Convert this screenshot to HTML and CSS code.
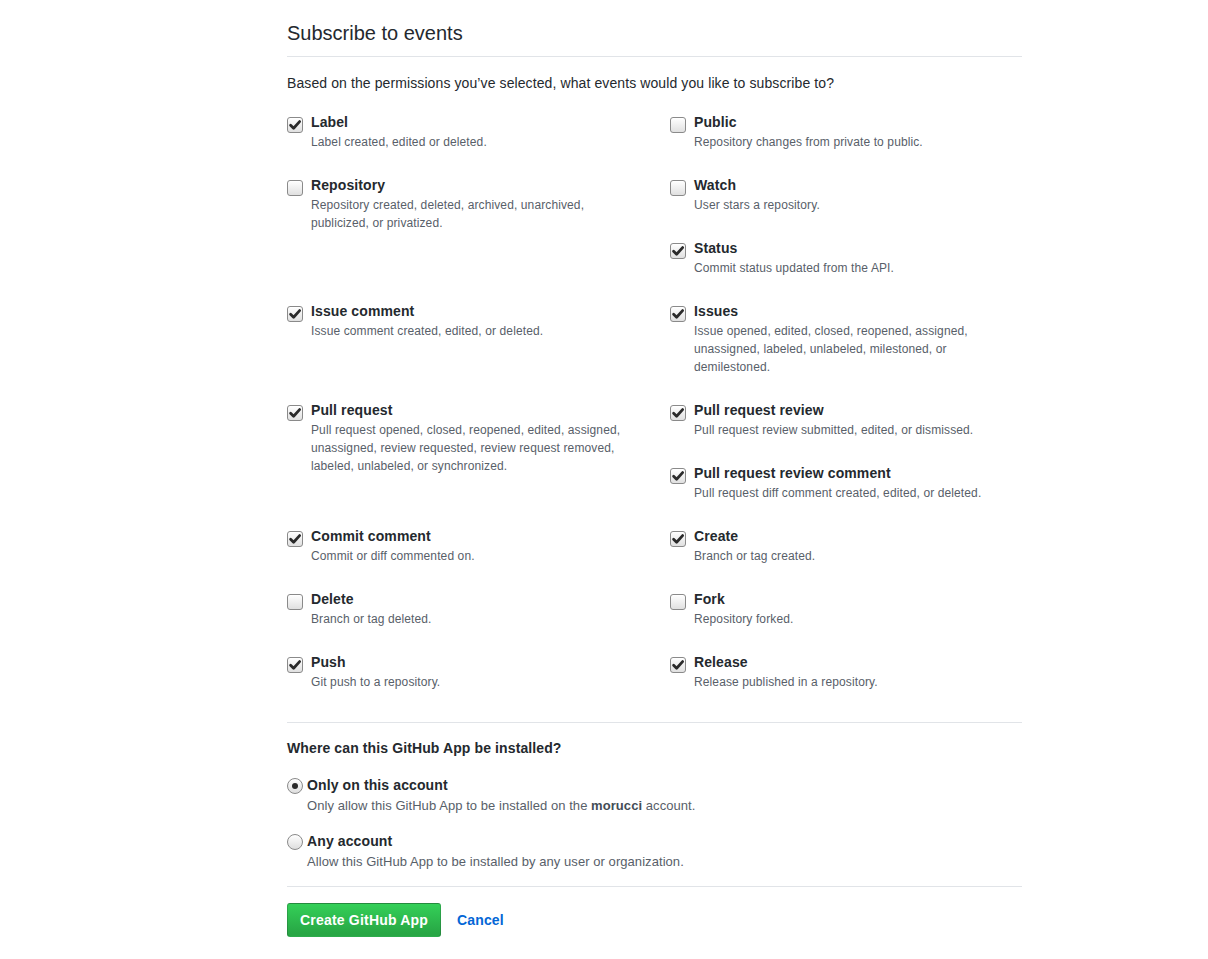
FILE: index.html
```html
<!DOCTYPE html>
<html>
<head>
<meta charset="utf-8">
<link rel="stylesheet" href="styles.css">
</head>
<body>
<div class="page">
  <div class="content">
    <div class="subhead"><h2 class="subhead-heading">Subscribe to events</h2></div>
    <p class="lead">Based on the permissions you’ve selected, what events would you like to subscribe to?</p>

    <div class="events">
      <div class="cell">
        <div class="event"><span class="cb checked"><svg viewBox="0 0 16 16" width="16" height="16"><path d="M3.6 8.2 L6.6 11.2 L12.6 4.6" /></svg></span><div><div class="ev-title">Label</div><div class="ev-note">Label created, edited or deleted.</div></div></div>
      </div>
      <div class="cell">
        <div class="event"><span class="cb"></span><div><div class="ev-title">Public</div><div class="ev-note">Repository changes from private to public.</div></div></div>
      </div>

      <div class="cell">
        <div class="event"><span class="cb"></span><div><div class="ev-title">Repository</div><div class="ev-note">Repository created, deleted, archived, unarchived, publicized, or privatized.</div></div></div>
      </div>
      <div class="cell">
        <div class="event"><span class="cb"></span><div><div class="ev-title">Watch</div><div class="ev-note">User stars a repository.</div></div></div>
        <div class="event"><span class="cb checked"><svg viewBox="0 0 16 16" width="16" height="16"><path d="M3.6 8.2 L6.6 11.2 L12.6 4.6" /></svg></span><div><div class="ev-title">Status</div><div class="ev-note">Commit status updated from the API.</div></div></div>
      </div>

      <div class="cell">
        <div class="event"><span class="cb checked"><svg viewBox="0 0 16 16" width="16" height="16"><path d="M3.6 8.2 L6.6 11.2 L12.6 4.6" /></svg></span><div><div class="ev-title">Issue comment</div><div class="ev-note">Issue comment created, edited, or deleted.</div></div></div>
      </div>
      <div class="cell">
        <div class="event"><span class="cb checked"><svg viewBox="0 0 16 16" width="16" height="16"><path d="M3.6 8.2 L6.6 11.2 L12.6 4.6" /></svg></span><div><div class="ev-title">Issues</div><div class="ev-note">Issue opened, edited, closed, reopened, assigned, unassigned, labeled, unlabeled, milestoned, or demilestoned.</div></div></div>
      </div>

      <div class="cell">
        <div class="event"><span class="cb checked"><svg viewBox="0 0 16 16" width="16" height="16"><path d="M3.6 8.2 L6.6 11.2 L12.6 4.6" /></svg></span><div><div class="ev-title">Pull request</div><div class="ev-note">Pull request opened, closed, reopened, edited, assigned, unassigned, review requested, review request removed, labeled, unlabeled, or synchronized.</div></div></div>
      </div>
      <div class="cell">
        <div class="event"><span class="cb checked"><svg viewBox="0 0 16 16" width="16" height="16"><path d="M3.6 8.2 L6.6 11.2 L12.6 4.6" /></svg></span><div><div class="ev-title">Pull request review</div><div class="ev-note">Pull request review submitted, edited, or dismissed.</div></div></div>
        <div class="event"><span class="cb checked"><svg viewBox="0 0 16 16" width="16" height="16"><path d="M3.6 8.2 L6.6 11.2 L12.6 4.6" /></svg></span><div><div class="ev-title">Pull request review comment</div><div class="ev-note">Pull request diff comment created, edited, or deleted.</div></div></div>
      </div>

      <div class="cell">
        <div class="event"><span class="cb checked"><svg viewBox="0 0 16 16" width="16" height="16"><path d="M3.6 8.2 L6.6 11.2 L12.6 4.6" /></svg></span><div><div class="ev-title">Commit comment</div><div class="ev-note">Commit or diff commented on.</div></div></div>
      </div>
      <div class="cell">
        <div class="event"><span class="cb checked"><svg viewBox="0 0 16 16" width="16" height="16"><path d="M3.6 8.2 L6.6 11.2 L12.6 4.6" /></svg></span><div><div class="ev-title">Create</div><div class="ev-note">Branch or tag created.</div></div></div>
      </div>

      <div class="cell">
        <div class="event"><span class="cb"></span><div><div class="ev-title">Delete</div><div class="ev-note">Branch or tag deleted.</div></div></div>
      </div>
      <div class="cell">
        <div class="event"><span class="cb"></span><div><div class="ev-title">Fork</div><div class="ev-note">Repository forked.</div></div></div>
      </div>

      <div class="cell">
        <div class="event"><span class="cb checked"><svg viewBox="0 0 16 16" width="16" height="16"><path d="M3.6 8.2 L6.6 11.2 L12.6 4.6" /></svg></span><div><div class="ev-title">Push</div><div class="ev-note">Git push to a repository.</div></div></div>
      </div>
      <div class="cell">
        <div class="event"><span class="cb checked"><svg viewBox="0 0 16 16" width="16" height="16"><path d="M3.6 8.2 L6.6 11.2 L12.6 4.6" /></svg></span><div><div class="ev-title">Release</div><div class="ev-note">Release published in a repository.</div></div></div>
      </div>
    </div>

    <hr class="sep first">

    <div class="install-heading">Where can this GitHub App be installed?</div>

    <div class="radio-item">
      <span class="radio checked"></span>
      <div>
        <div class="ev-title">Only on this account</div>
        <div class="radio-note">Only allow this GitHub App to be installed on the <strong>morucci</strong> account.</div>
      </div>
    </div>
    <div class="radio-item">
      <span class="radio"></span>
      <div>
        <div class="ev-title">Any account</div>
        <div class="radio-note">Allow this GitHub App to be installed by any user or organization.</div>
      </div>
    </div>

    <hr class="sep last">

    <div class="actions">
      <button class="btn-primary" type="button">Create GitHub App</button>
      <a class="cancel" href="#">Cancel</a>
    </div>
  </div>
</div>
</body>
</html>
```

FILE: styles.css
```css
* { box-sizing: border-box; }

body {
  margin: 0;
  background: #fff;
  font-family: "Liberation Sans", Arial, Helvetica, sans-serif;
  color: #24292e;
  font-size: 14px;
  line-height: 20px;
  letter-spacing: 0.008em;
}

.page {
  padding-left: 287px;
  padding-top: 18px;
}

.content {
  width: 735px;
}

.subhead {
  padding-bottom: 8px;
  border-bottom: 1px solid #e1e4e8;
}

.subhead-heading {
  margin: 0;
  font-size: 20px;
  font-weight: normal;
  line-height: 30px;
  color: #24292e;
  letter-spacing: 0;
}

.lead {
  margin: 16px 0 19px;
  font-size: 14px;
  line-height: 20px;
  letter-spacing: 0.1px;
}

.events {
  display: grid;
  grid-template-columns: 383px 1fr;
}

.cell {
  padding-right: 40px;
}

.event {
  display: flex;
  gap: 8px;
  margin-bottom: 24px;
}

.cb {
  flex: none;
  width: 16px;
  height: 16px;
  margin-top: 5px;
  border: 1px solid #8a8a8a;
  border-radius: 3px;
  background: linear-gradient(#ffffff, #e0e0e0);
  box-shadow: inset 0 1px 0 #fff;
}

.cb svg {
  display: block;
  margin: -1px 0 0 -1px;
}

.cb svg path {
  fill: none;
  stroke: #2a2a2a;
  stroke-width: 2.8;
  stroke-linecap: round;
  stroke-linejoin: round;
}

.ev-title {
  font-size: 14px;
  font-weight: bold;
  line-height: 20px;
  color: #24292e;
}

.ev-note {
  padding-top: 1px;
  font-size: 12px;
  line-height: 18px;
  color: #586069;
}

.sep {
  border: 0;
  border-top: 1px solid #e1e4e8;
  margin: 0;
  height: 0;
}

.sep.first {
  margin-top: 7px;
}

.install-heading {
  margin-top: 15px;
  font-weight: bold;
  font-size: 14px;
  line-height: 20px;
}

.radio-item {
  display: flex;
  gap: 4px;
  margin-top: 17px;
}

.radio-item + .radio-item {
  margin-top: 15px;
}

.radio {
  flex: none;
  width: 16px;
  height: 16px;
  margin-top: 3px;
  border: 1px solid #8a8a8a;
  border-radius: 50%;
  background: linear-gradient(#ffffff, #dedede);
  display: flex;
  align-items: center;
  justify-content: center;
}

.radio.checked::after {
  content: "";
  width: 6px;
  height: 6px;
  border-radius: 50%;
  background: #2a2a2a;
}

.radio-note {
  padding-top: 1px;
  font-size: 13px;
  line-height: 20px;
  color: #586069;
  letter-spacing: 0.06px;
}

.radio-note strong {
  color: #444d56;
}

.sep.last {
  margin-top: 14px;
}

.actions {
  margin-top: 16px;
  display: flex;
  align-items: center;
  gap: 16px;
}

.btn-primary {
  font-family: "Liberation Sans", Arial, Helvetica, sans-serif;
  font-size: 14px;
  font-weight: bold;
  line-height: 20px;
  letter-spacing: 0.2px;
  padding: 6px 12px;
  color: #fff;
  background: linear-gradient(-180deg, #34d058 0%, #28a745 90%);
  border: 1px solid rgba(27, 31, 35, 0.2);
  border-radius: 3px;
  cursor: pointer;
}

.cancel {
  color: #0366d6;
  font-weight: bold;
  text-decoration: none;
  font-size: 14px;
}
```
